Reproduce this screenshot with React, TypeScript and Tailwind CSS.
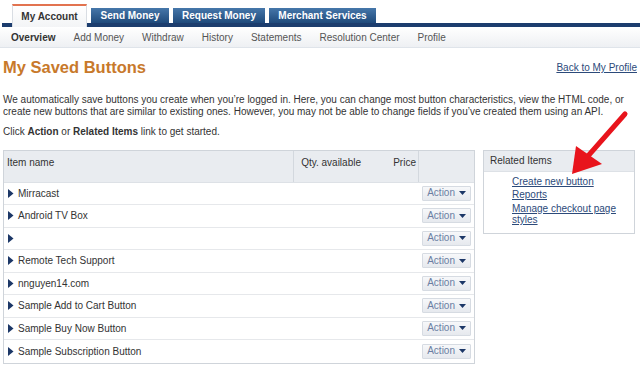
import React from "react";

const rows = [
  "Mirracast",
  "Android TV Box",
  "",
  "Remote Tech Support",
  "nnguyen14.com",
  "Sample Add to Cart Button",
  "Sample Buy Now Button",
  "Sample Subscription Button",
];

function Bullet() {
  return (
    <svg width="6" height="9" viewBox="0 0 6 9" className="shrink-0">
      <polygon points="0,0 5.5,4.5 0,9" fill="#1c3767" />
    </svg>
  );
}

function ActionBtn() {
  return (
    <div className="flex items-center gap-[4px] h-[15px] pl-[4px] pr-[4px] border border-[#d6dbe2] bg-gradient-to-b from-[#f7f8fa] to-[#e6e9ee] text-[10px] leading-none text-[#6b7fa3] rounded-[1px]">
      <span>Action</span>
      <svg width="7" height="4" viewBox="0 0 7 4">
        <polygon points="0,0 7,0 3.5,4" fill="#1c3767" />
      </svg>
    </div>
  );
}

export default function App() {
  return (
    <div
      className="w-[640px] h-[368px] bg-white overflow-hidden relative text-[#333]"
      style={{ fontFamily: '"Liberation Sans", Arial, sans-serif' }}
    >
      {/* Tabs */}
      <div className="flex items-end h-[27px] pl-[2px] pt-[4px]">
        <div className="w-[10px] h-[4px] bg-[#1c3d6e]" />
        <div className="h-[23px] w-[75px] flex items-center justify-center border-t-2 border-t-[#e2734f] border-x border-x-[#d9dde3] bg-gradient-to-b from-white to-[#f3f4f6] text-[10px] font-bold text-[#333]">
          My Account
        </div>
        <div className="flex-1 flex items-end gap-[4px] pl-[4px] border-b-4 border-[#1c3d6e]">
          <div className="h-[15px] w-[78px] flex items-center justify-center bg-gradient-to-b from-[#4677aa] to-[#1f4a7b] text-white text-[10px] font-bold">
            Send Money
          </div>
          <div className="h-[15px] w-[92px] flex items-center justify-center bg-gradient-to-b from-[#4677aa] to-[#1f4a7b] text-white text-[10px] font-bold">
            Request Money
          </div>
          <div className="h-[15px] w-[107px] flex items-center justify-center bg-gradient-to-b from-[#4677aa] to-[#1f4a7b] text-white text-[10px] font-bold">
            Merchant Services
          </div>
        </div>
      </div>

      {/* Sub nav */}
      <div className="h-[21px] flex items-center pl-[11px] gap-[18px] bg-gradient-to-b from-white to-[#eef0f3] border-b border-[#dfe4ea] text-[10px] text-[#555]">
        <span className="font-bold text-[#333]">Overview</span>
        <span>Add Money</span>
        <span>Withdraw</span>
        <span>History</span>
        <span>Statements</span>
        <span>Resolution Center</span>
        <span>Profile</span>
      </div>

      {/* Title row */}
      <div className="flex items-end justify-between pl-[3px] pr-[3px] mt-[9px] h-[20px]">
        <h1 className="text-[16.5px] font-bold leading-[20px] text-[#c8792b]">My Saved Buttons</h1>
        <a className="text-[10px] text-[#2c4a7a] underline mb-[2px]">Back to My Profile</a>
      </div>

      {/* Description */}
      <div className="pl-[3px] mt-[17px] text-[10px] leading-[11.5px] text-[#333]">
        <p>
          We automatically save buttons you create when you’re logged in. Here, you can change most button characteristics, view the HTML code, or
          <br />
          create new buttons that are similar to existing ones. However, you may not be able to change fields if you’ve created them using an API.
        </p>
        <p className="mt-[9px]">
          Click <b>Action</b> or <b>Related Items</b> link to get started.
        </p>
      </div>

      {/* Main content */}
      <div className="flex items-start pl-[3px] mt-[12px] gap-[8px]">
        <div className="w-[472px] border border-[#cfd4da] text-[10px]">
          <div className="flex h-[32px] bg-[#e9ecf0] border-b border-[#dde1e6] text-[#333]">
            <div className="w-[290px] pl-[3px] pt-[4px] border-r border-[#d3d8de]">Item name</div>
            <div className="w-[72px] pr-[5px] pt-[4px] text-right">Qty. available</div>
            <div className="w-[53px] pr-[2px] pt-[4px] text-right border-r border-[#d3d8de]">Price</div>
            <div className="flex-1" />
          </div>
          {rows.map((r, i) => (
            <div
              key={i}
              className={`flex items-center h-[22.5px] ${i < rows.length - 1 ? "border-b border-[#e6e8eb]" : ""}`}
            >
              <div className="flex items-center gap-[4px] pl-[4px] w-[290px] text-[#333]">
                <Bullet />
                <span>{r}</span>
              </div>
              <div className="flex-1" />
              <div className="pr-[3px]">
                <ActionBtn />
              </div>
            </div>
          ))}
        </div>

        <div className="w-[152px] border border-[#cfd4da] text-[10px]">
          <div className="h-[21px] flex items-center pl-[6px] bg-[#e9ecf0] border-b border-[#dde1e6] text-[#333]">
            Related Items
          </div>
          <div className="pl-[28px] pt-[4px] pb-[7px] flex flex-col gap-[2px] text-[#2c4a7a] leading-[11.5px]">
            <a className="underline">Create new button</a>
            <a className="underline">Reports</a>
            <a className="underline">Manage checkout page styles</a>
          </div>
        </div>
      </div>

      {/* Red annotation arrow */}
      <svg className="absolute left-0 top-0 pointer-events-none" width="640" height="368">
        <line x1="625" y1="114" x2="588" y2="156" stroke="#e8141c" strokeWidth="5" strokeLinecap="round" />
        <polygon points="572,174 576,146 602,164" fill="#e8141c" />
      </svg>
    </div>
  );
}
